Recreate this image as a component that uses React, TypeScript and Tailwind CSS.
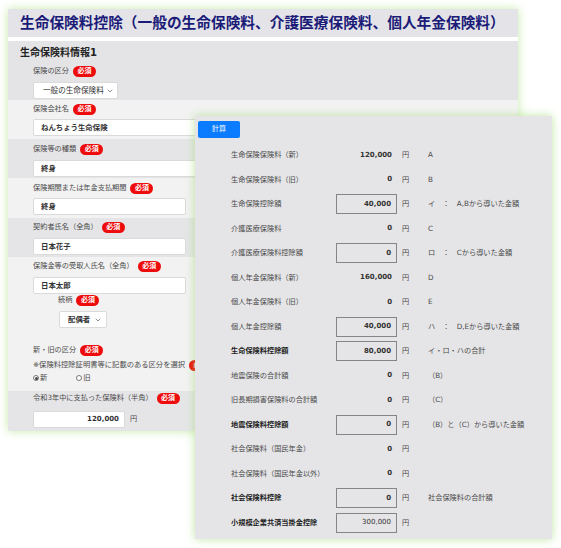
import React from "react";
import { ChevronDown } from "lucide-react";

const Badge = () => (
  <span className="ml-[4px] inline-flex h-[11px] w-[23px] items-center justify-center rounded-full bg-[#ee0b0b] text-[7px] font-bold leading-none text-white">
    必須
  </span>
);

const Label = ({ children, badge = true, className = "" }: { children: React.ReactNode; badge?: boolean; className?: string }) => (
  <div className={`flex h-[10px] items-center text-[7.2px] leading-none text-[#4a4a4a] ${className}`}>
    <span>{children}</span>
    {badge && <Badge />}
  </div>
);

const Input = ({ children, className = "" }: { children: React.ReactNode; className?: string }) => (
  <div className={`flex h-[17px] items-center rounded-[2px] border border-[#dadada] bg-white pl-[7px] text-[7.4px] font-bold text-[#333] ${className}`}>
    {children}
  </div>
);

type Row = { label: string; value: string; box?: boolean; bold?: boolean; note?: string; light?: boolean };

const rows: Row[] = [
  { label: "生命保険保険料（新）", value: "120,000", note: "A" },
  { label: "生命保険保険料（旧）", value: "0", note: "B" },
  { label: "生命保険控除額", value: "40,000", box: true, note: "イ　：　A,Bから導いた金額" },
  { label: "介護医療保険料", value: "0", note: "C" },
  { label: "介護医療保険料控除額", value: "0", box: true, note: "ロ　：　Cから導いた金額" },
  { label: "個人年金保険料（新）", value: "160,000", note: "D" },
  { label: "個人年金保険料（旧）", value: "0", note: "E" },
  { label: "個人年金控除額", value: "40,000", box: true, note: "ハ　：　D,Eから導いた金額" },
  { label: "生命保険料控除額", value: "80,000", box: true, bold: true, note: "イ・ロ・ハの合計" },
  { label: "地震保険の合計額", value: "0", note: "（B）" },
  { label: "旧長期損害保険料の合計額", value: "0", note: "（C）" },
  { label: "地震保険料控除額", value: "0", box: true, bold: true, note: "（B）と（C）から導いた金額" },
  { label: "社会保険料（国民年金）", value: "0" },
  { label: "社会保険料（国民年金以外）", value: "0" },
  { label: "社会保険料控除", value: "0", box: true, bold: true, note: "社会保険料の合計額" },
  { label: "小規模企業共済当掛金控除", value: "300,000", box: true, bold: true, light: true },
];

export default function App() {
  return (
    <div className="relative h-[548px] w-[561px] overflow-hidden bg-white font-['DejaVu_Sans','Noto_Sans_CJK_JP',sans-serif]">
      {/* Left form panel */}
      <div className="ml-[8px] mt-[9px] flex h-[422px] w-[510px] flex-col bg-[#f1f1f1] shadow-[0_0_9px_rgba(150,215,100,0.55)]">
        <div className="flex h-[28px] shrink-0 items-center bg-[#e4e4e8] pl-[12px]">
          <h1 className="text-[14.7px] font-bold leading-none text-[#1b1b78]">
            生命保険料控除（一般の生命保険料、介護医療保険料、個人年金保険料）
          </h1>
        </div>
        <div className="h-[4px] shrink-0 bg-white" />
        {/* section 1 */}
        <div className="flex h-[59px] shrink-0 flex-col bg-[#e4e4e6] pt-[5px]">
          <div className="flex h-[14px] items-center pl-[12px] text-[10px] font-bold leading-none text-[#222]">生命保険料情報1</div>
          <div className="pl-[25px] pt-[6px]">
            <Label>保険の区分</Label>
            <div className="mt-[6px] flex h-[17px] w-[85px] items-center justify-between rounded-[2px] border border-[#dadada] bg-white pl-[9px] pr-[3px] text-[7.6px] text-[#333]">
              <span>一般の生命保険料</span>
              <ChevronDown size={8} strokeWidth={2} className="text-[#555]" />
            </div>
          </div>
        </div>
        {/* row 2 */}
        <div className="flex h-[39px] shrink-0 flex-col bg-[#f2f2f2] pl-[25px] pt-[4px]">
          <Label>保険会社名</Label>
          <Input className="mt-[5px] w-[300px]">ねんちょう生命保険</Input>
        </div>
        {/* row 3 */}
        <div className="flex h-[39px] shrink-0 flex-col bg-[#e5e5e7] pl-[25px] pt-[5px]">
          <Label>保険等の種類</Label>
          <Input className="mt-[6px] w-[300px]">終身</Input>
        </div>
        {/* row 4 */}
        <div className="flex h-[40px] shrink-0 flex-col bg-[#f2f2f2] pl-[25px] pt-[5px]">
          <Label>保険期間または年金支払期間</Label>
          <Input className="mt-[5px] w-[153px]">終身</Input>
        </div>
        {/* row 5 */}
        <div className="flex h-[39px] shrink-0 flex-col bg-[#e5e5e7] pl-[25px] pt-[4px]">
          <Label>契約者氏名（全角）</Label>
          <Input className="mt-[6px] w-[153px]">日本花子</Input>
        </div>
        {/* row 6 */}
        <div className="flex h-[134px] shrink-0 flex-col bg-[#f2f2f2] pl-[25px] pt-[4px]">
          <Label>保険金等の受取人氏名（全角）</Label>
          <Input className="mt-[6px] w-[153px]">日本太郎</Input>
          <Label className="ml-[25px] mt-[1px]">続柄</Label>
          <div className="ml-[26px] mt-[6px] flex h-[17px] w-[48px] items-center justify-between rounded-[2px] border border-[#dadada] bg-white pl-[8px] pr-[4px] text-[7.4px] font-bold text-[#333]">
            <span>配偶者</span>
            <ChevronDown size={8} strokeWidth={2} className="text-[#555]" />
          </div>
          <Label className="mt-[17px]">新・旧の区分</Label>
          <div className="mt-[5px] flex h-[10px] items-center whitespace-nowrap text-[7.3px] leading-none text-[#4a4a4a]">
            ※保険料控除証明書等に記載のある区分を選択
            <Badge />
          </div>
          <div className="mt-[3px] flex h-[10px] items-center text-[7.3px] leading-none text-[#4a4a4a]">
            <span className="flex h-[6px] w-[6px] items-center justify-center rounded-full border border-[#777] bg-white">
              <span className="h-[3px] w-[3px] rounded-full bg-[#444]" />
            </span>
            <span className="ml-[1px]">新</span>
            <span className="ml-[29px] h-[6px] w-[6px] rounded-full border border-[#777] bg-white" />
            <span className="ml-[1px]">旧</span>
          </div>
        </div>
        {/* row 7 */}
        <div className="flex h-[40px] shrink-0 flex-col bg-[#e5e5e7] pl-[25px] pt-[2px]">
          <Label>令和3年中に支払った保険料（半角）</Label>
          <div className="mt-[8px] flex items-center">
            <div className="flex h-[17px] w-[92px] items-center justify-end rounded-[2px] border border-[#dadada] bg-white pr-[5px] text-[7px] font-bold text-[#333]">
              120,000
            </div>
            <span className="ml-[5px] text-[7.2px] text-[#4a4a4a]">円</span>
          </div>
        </div>
      </div>

      {/* Overlay result panel */}
      <div className="absolute left-[195px] top-[116px] flex h-[423px] w-[357px] flex-col bg-[#e5e5e7] shadow-[0_0_9px_rgba(150,215,100,0.6)]">
        <button className="ml-[3px] mt-[5px] flex h-[17px] w-[42px] items-center justify-center rounded-[2px] bg-[#0b7cff] text-[7px] text-white">
          計算
        </button>
        <div className="mt-[4.75px] flex flex-col">
          {rows.map((r, i) => (
            <div key={i} className="flex h-[24.5px] items-center pl-[36px]">
              <div className={`w-[105px] whitespace-nowrap text-[7.2px] leading-none ${r.bold ? "font-bold text-[#222]" : "text-[#4a4a4a]"}`}>
                {r.label}
              </div>
              <div
                className={`flex h-[20px] w-[61px] items-center justify-end pr-[5px] text-[7px] leading-none text-[#333] ${
                  r.box ? "border-[1.5px] border-[#858585]" : ""
                } ${r.light ? "font-normal" : "font-bold"}`}
              >
                {r.value}
              </div>
              <span className="ml-[5px] w-[7px] text-[7.2px] leading-none text-[#4a4a4a]">円</span>
              {r.note && (
                <span className="ml-[19px] whitespace-nowrap text-[7.2px] leading-none text-[#4a4a4a]">{r.note}</span>
              )}
            </div>
          ))}
        </div>
      </div>
    </div>
  );
}
